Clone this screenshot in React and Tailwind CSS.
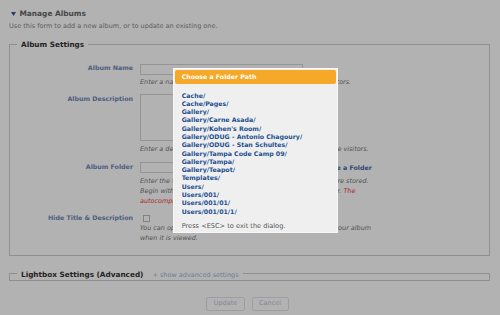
import { useState } from "react";

const FOLDERS = [
  "Cache/",
  "Cache/Pages/",
  "Gallery/",
  "Gallery/Carne Asada/",
  "Gallery/Kohen's Room/",
  "Gallery/ODUG - Antonio Chagoury/",
  "Gallery/ODUG - Stan Schultes/",
  "Gallery/Tampa Code Camp 09/",
  "Gallery/Tampa/",
  "Gallery/Teapot/",
  "Templates/",
  "Users/",
  "Users/001/",
  "Users/001/01/",
  "Users/001/01/1/",
];

function Row({ label, children, className = "" }) {
  return (
    <div className={`flex items-start ${className}`}>
      <div className="mt-[-0.5px] w-[116px] shrink-0 text-right text-[6.3px] font-bold leading-[9px] text-[#7088b8]">
        {label}
      </div>
      <div className="ml-[7px] flex-1">{children}</div>
    </div>
  );
}

function Hint({ children, className = "" }) {
  return <div className={`text-[6.45px] italic leading-[10px] text-[#777] ${className}`}>{children}</div>;
}

export default function App() {
  const [hide, setHide] = useState(false);
  return (
    <div className="relative h-[315px] w-[500px] overflow-hidden bg-white font-['DejaVu_Sans',Verdana,sans-serif]">
      <div className="pl-[9px] pr-[10px] pt-[9px]">
        <div className="flex h-[10px] items-center">
          <svg width="5" height="4" viewBox="0 0 5 4" className="ml-[2px]">
            <path d="M0 0h5L2.5 4z" fill="#335599" />
          </svg>
          <span className="ml-[3.5px] text-[7.4px] font-bold text-[#666]">Manage Albums</span>
        </div>
        <div className="mt-[2.5px] text-[6.5px] leading-[9px] text-[#888]">
          Use this form to add a new album, or to update an existing one.
        </div>

        <fieldset className="mt-[9px] border border-[#cfcfcf] pb-[12px] pl-[7px]">
          <legend className="px-[4px] text-[7.3px] font-bold leading-[10px] text-[#333]">Album Settings</legend>
          <Row label="Album Name" className="mt-[14px]">
            <div className="h-[11px] w-[163px] border border-[#d6d6d6] bg-white" />
            <Hint className="mt-[2.5px]">Enter a name for the album. This will be shown to all site visitors.</Hint>
          </Row>
          <Row label="Album Description" className="mt-[7px]">
            <div className="h-[47px] w-[163px] border border-[#d6d6d6] bg-white" />
            <Hint className="mt-[3px]">Enter a description for the album. This will be shown to all site visitors.</Hint>
          </Row>
          <Row label="Album Folder" className="mt-[8px]">
            <div className="flex items-center">
              <div className="h-[11px] w-[165px] border border-[#d6d6d6] bg-white" />
              <span className="ml-[10px] text-[6.3px] font-bold text-[#45679f]">Choose a Folder</span>
            </div>
            <Hint className="mt-[2.5px]">Enter the full path of the folder where your album's images are stored.</Hint>
            <Hint>
              Begin with the folder name under the site's gallery root folder. <span className="text-[#f03c3c]">The</span>
            </Hint>
            <Hint className="text-[#f03c3c]">autocomplete list will suggest matching folders.</Hint>
          </Row>
          <Row label="Hide Title & Description" className="mt-[7.5px]">
            <button
              onClick={() => setHide(!hide)}
              className="ml-[2.5px] mt-[2px] block h-[7px] w-[7px] border border-[#bbb] bg-white"
            />
            <Hint className="mt-[1px]">You can optionally hide the title and description shown with your album</Hint>
            <Hint>when it is viewed.</Hint>
          </Row>
        </fieldset>

        <fieldset className="mt-[11px] border border-[#cfcfcf] pl-[7px]">
          <legend className="px-[4px] leading-[10px]">
            <span className="text-[7.3px] font-bold text-[#333]">Lightbox Settings (Advanced)</span>
            <span className="ml-[9px] text-[6.5px] text-[#9fb4dd]">+ show advanced settings</span>
          </legend>
        </fieldset>

        <div className="mt-[16px] flex gap-[6.5px] pl-[197px]">
          <button className="h-[13.5px] w-[39px] rounded-[2px] border border-[#e2e2e2] bg-white text-[6.5px] text-[#b9c4dc]">
            Update
          </button>
          <button className="h-[13.5px] w-[37px] rounded-[2px] border border-[#e2e2e2] bg-white text-[6.5px] text-[#b9c4dc]">
            Cancel
          </button>
        </div>
      </div>

      <div className="absolute inset-0 bg-black/30" />

      <div className="absolute left-[173px] top-[68px] h-[165px] w-[165px] border border-[#f8f8f8] bg-[#efefef] p-[1px]">
        <div className="h-[14px] rounded-[2px] bg-[#f6a828] pl-[6.7px] text-[6.25px] font-bold leading-[14px] text-white">
          Choose a Folder Path
        </div>
        <div className="mt-[7.5px] pl-[6.7px] text-[6.25px] font-bold leading-[8.3px] text-[#1d4f91]">
          {FOLDERS.map((f) => (
            <div key={f}>{f}</div>
          ))}
        </div>
        <div className="mt-[6.5px] pl-[6.7px] text-[6.6px] leading-[8px] text-[#555]">
          Press &lt;ESC&gt; to exit the dialog.
        </div>
      </div>
    </div>
  );
}
